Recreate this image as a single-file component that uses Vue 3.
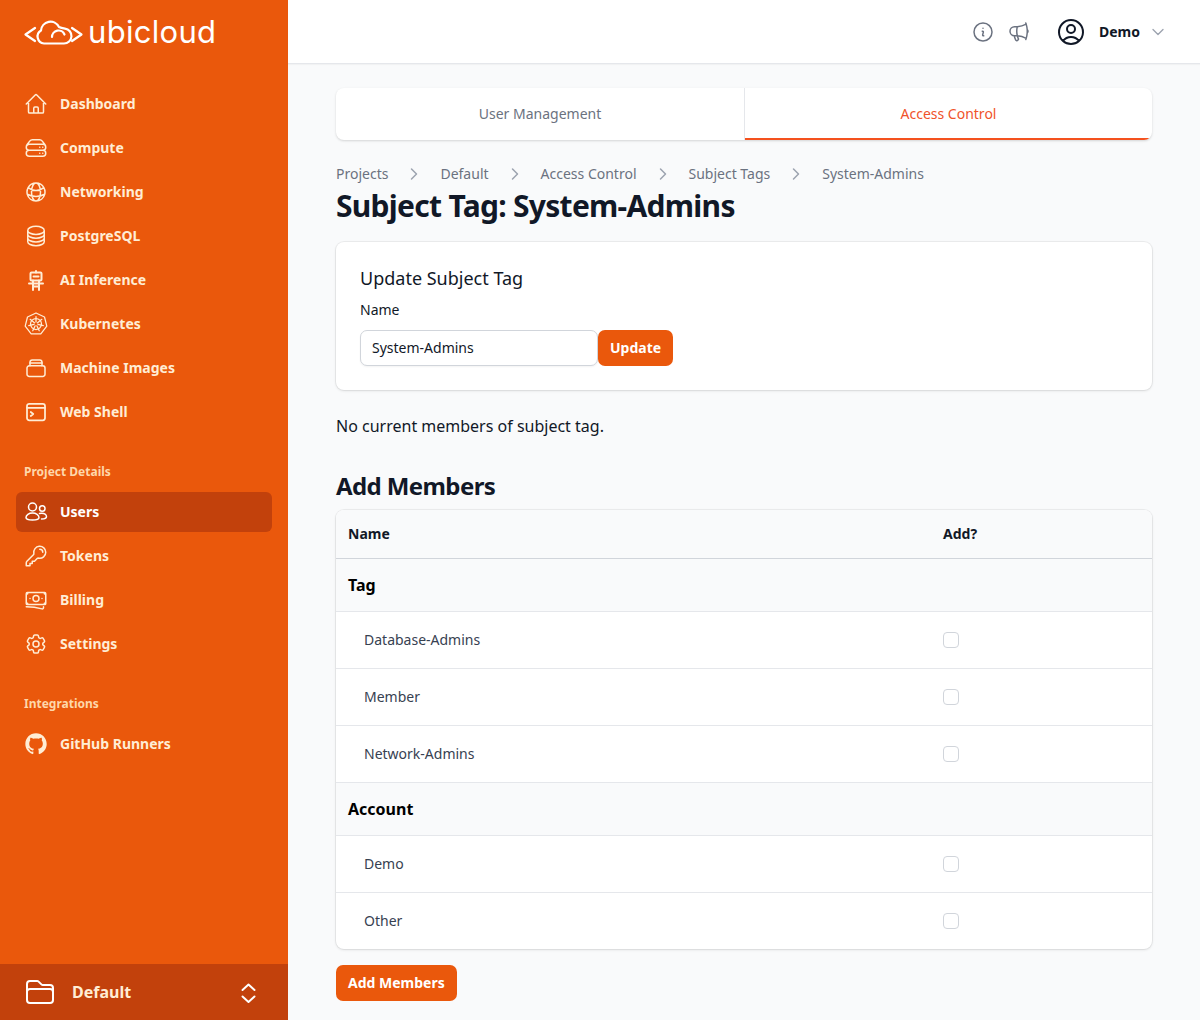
<template>
  <div class="layout">
    <aside class="sidebar">
      <div class="logo">
        <svg class="logoMark" viewBox="24 18 60 26" fill="none" stroke="#fff" stroke-width="2.2" stroke-linecap="round" stroke-linejoin="round">
          <path d="M35 27 25.500 33.500 35 40" />
          <path d="M72 27 81.500 33.500 72 40" />
          <path d="M44 42.500H64a7.500 7.500 0 0 0 1-14.930C62.800 27.300 60.800 27 59 26A9.500 9.500 0 0 0 41 29.500 7 7 0 0 0 44 42.500Z" />
          <path d="M52 36A6.500 6.500 0 0 1 64.500 33.500" />
        </svg>
        <span class="logoText">ubicloud</span>
      </div>

      <nav class="nav firstNav">
        <a v-for="item in mainNav" :key="item.label" class="navItem">
          <svg class="navIcon" viewBox="0 0 24 24" fill="none" stroke="currentColor" :stroke-width="item.stroke || 1.5" stroke-linecap="round" stroke-linejoin="round">
            <path v-for="d in item.paths" :key="d" :d="d" />
          </svg>
          {{ item.label }}
        </a>
      </nav>

      <div class="navHeading">Project Details</div>
      <nav class="nav">
        <a v-for="item in projectNav" :key="item.label" class="navItem" :class="{ active: item.active }">
          <svg class="navIcon" viewBox="0 0 24 24" fill="none" stroke="currentColor" stroke-width="1.5" stroke-linecap="round" stroke-linejoin="round">
            <path v-for="d in item.paths" :key="d" :d="d" />
          </svg>
          {{ item.label }}
        </a>
      </nav>

      <div class="navHeading">Integrations</div>
      <nav class="nav">
        <a class="navItem">
          <svg class="navIcon" viewBox="-1.500 -1.500 27 27" fill="currentColor">
            <path :d="githubPath" />
          </svg>
          GitHub Runners
        </a>
      </nav>

      <div class="projectSwitch">
        <svg class="folderIcon" viewBox="0 0 24 24" fill="none" stroke="currentColor" stroke-width="1.5" stroke-linecap="round" stroke-linejoin="round">
          <path d="M2.250 12.750V12A2.250 2.250 0 0 1 4.500 9.750h15A2.250 2.250 0 0 1 21.750 12v.75m-8.690-6.440-2.120-2.120a1.500 1.500 0 0 0-1.061-.44H4.500A2.250 2.250 0 0 0 2.250 6v12a2.250 2.250 0 0 0 2.250 2.250h15A2.250 2.250 0 0 0 21.750 18V9a2.250 2.250 0 0 0-2.250-2.250h-5.379a1.500 1.500 0 0 1-1.060-.44Z" />
        </svg>
        <span class="projectName">Default</span>
        <svg class="upDown" viewBox="0 0 24 24" fill="none" stroke="currentColor" stroke-width="2" stroke-linecap="round" stroke-linejoin="round">
          <path d="M6.500 10l6-5.500 6 5.500M6.500 16.500l6 5.500 6-5.500" />
        </svg>
      </div>
    </aside>

    <div class="content">
      <header class="topbar">
        <svg class="topIcon" viewBox="0 0 24 24" fill="none" stroke="currentColor" stroke-width="1.500" stroke-linecap="round" stroke-linejoin="round">
          <path d="m11.250 11.250.041-.02a.750.750 0 0 1 1.063.852l-.708 2.836a.750.750 0 0 0 1.063.853l.041-.021M21 12a9 9 0 1 1-18 0 9 9 0 0 1 18 0Zm-9-3.750h.008v.008H12V8.250Z" />
        </svg>
        <svg class="topIcon megaphone" viewBox="0 0 24 24" fill="none" stroke="currentColor" stroke-width="1.500" stroke-linecap="round" stroke-linejoin="round">
          <path d="M10.340 15.840c-.688-.06-1.386-.09-2.090-.09H7.500a4.500 4.500 0 1 1 0-9h.75c.704 0 1.402-.03 2.090-.09m0 9.180c.253.962.584 1.892.985 2.783.247.55.06 1.210-.463 1.511l-.657.38c-.551.318-1.260.117-1.527-.461a20.845 20.845 0 0 1-1.440-4.282m3.102.069a18.030 18.030 0 0 1-.59-4.590c0-1.586.205-3.124.59-4.590m0 9.180a23.848 23.848 0 0 1 8.835 2.535M10.340 6.660a23.847 23.847 0 0 0 8.835-2.535m0 0A23.740 23.740 0 0 0 18.795 3m.38 1.125a23.910 23.910 0 0 1 1.014 5.395m-1.014 8.855c-.118.38-.245.754-.38 1.125m.38-1.125a23.910 23.910 0 0 0 1.014-5.395m0-3.460c.495.413.811 1.035.811 1.730 0 .695-.316 1.317-.811 1.730m0-3.460a24.347 24.347 0 0 1 0 3.460" />
        </svg>
        <svg class="avatar" viewBox="0 0 24 24" fill="none" stroke="currentColor" stroke-width="1.500" stroke-linecap="round" stroke-linejoin="round">
          <path d="M17.982 18.725A7.488 7.488 0 0 0 12 15.750a7.488 7.488 0 0 0-5.982 2.975m11.963 0a9 9 0 1 0-11.963 0m11.963 0A8.966 8.966 0 0 1 12 21a8.966 8.966 0 0 1-5.982-2.275M15 9.750a3 3 0 1 1-6 0 3 3 0 0 1 6 0Z" />
        </svg>
        <span class="userName">Demo</span>
        <svg class="userChevron" viewBox="0 0 24 24" fill="none" stroke="currentColor" stroke-width="2" stroke-linecap="round" stroke-linejoin="round">
          <path d="m19.500 8.250-7.500 7.500-7.500-7.500" />
        </svg>
      </header>

      <main class="main">
        <div class="tabs">
          <a class="tab">User Management</a>
          <a class="tab tabActive">Access Control</a>
        </div>

        <ol class="breadcrumb">
          <li v-for="(crumb, i) in crumbs" :key="crumb" class="crumb">
            <svg v-if="i > 0" class="crumbChevron" viewBox="0 0 20 20" fill="none" stroke="currentColor" stroke-width="1.500" stroke-linecap="round" stroke-linejoin="round">
              <path d="m7.500 5 5 5-5 5" />
            </svg>
            {{ crumb }}
          </li>
        </ol>
        <h1 class="title">Subject Tag: System-Admins</h1>

        <section class="card">
          <h3 class="cardTitle">Update Subject Tag</h3>
          <label class="fieldLabel" for="tag-name">Name</label>
          <div class="fieldRow">
            <input id="tag-name" class="textInput" type="text" value="System-Admins" />
            <button class="button">Update</button>
          </div>
        </section>

        <p class="noMembers">No current members of subject tag.</p>

        <h2 class="sectionTitle">Add Members</h2>
        <div class="tableWrap">
          <table class="table">
            <thead>
              <tr>
                <th class="nameCol">Name</th>
                <th>Add?</th>
              </tr>
            </thead>
            <tbody v-for="group in groups" :key="group.name">
              <tr class="groupRow">
                <td colspan="2">{{ group.name }}</td>
              </tr>
              <tr v-for="member in group.members" :key="member" class="memberRow">
                <td class="memberName">{{ member }}</td>
                <td><input class="checkbox" type="checkbox" /></td>
              </tr>
            </tbody>
          </table>
        </div>

        <button class="button addButton">Add Members</button>
      </main>
    </div>
  </div>
</template>

<script setup>
const mainNav = [
  {
    label: 'Dashboard',
    paths: ['m2.250 12 8.954-8.955c.44-.439 1.152-.439 1.591 0L21.750 12M4.500 9.750v10.125c0 .621.504 1.125 1.125 1.125H9.750v-4.875c0-.621.504-1.125 1.125-1.125h2.250c.621 0 1.125.504 1.125 1.125V21h4.125c.621 0 1.125-.504 1.125-1.125V9.750M8.250 21h8.250'],
  },
  {
    label: 'Compute',
    paths: ['M5.250 14.250h13.500m-13.500 0a3 3 0 0 1-3-3m3 3a3 3 0 1 0 0 6h13.500a3 3 0 1 0 0-6m-16.500-3a3 3 0 0 1 3-3h13.500a3 3 0 0 1 3 3m-19.500 0a4.500 4.500 0 0 1 .9-2.700L5.737 5.100a3.375 3.375 0 0 1 2.700-1.350h7.126c1.062 0 2.062.5 2.700 1.350l2.587 3.450a4.500 4.500 0 0 1 .9 2.700m0 0a3 3 0 0 1-3 3m0 3h.008v.008h-.008v-.008Zm0-6h.008v.008h-.008v-.008Zm-3 6h.008v.008h-.008v-.008Zm0-6h.008v.008h-.008v-.008Z'],
  },
  {
    label: 'Networking',
    paths: ['M12 21a9.004 9.004 0 0 0 8.716-6.747M12 21a9.004 9.004 0 0 1-8.716-6.747M12 21c2.485 0 4.500-4.030 4.500-9S14.485 3 12 3m0 18c-2.485 0-4.500-4.030-4.500-9S9.515 3 12 3m0 0a8.997 8.997 0 0 1 7.843 4.582M12 3a8.997 8.997 0 0 0-7.843 4.582m15.686 0A11.953 11.953 0 0 1 12 10.500c-2.998 0-5.740-1.100-7.843-2.918m15.686 0A8.959 8.959 0 0 1 21 12c0 .778-.099 1.533-.284 2.253m0 0A17.919 17.919 0 0 1 12 16.500c-3.162 0-6.133-.815-8.716-2.247m0 0A9.015 9.015 0 0 1 3 12c0-1.605.42-3.113 1.157-4.418'],
  },
  {
    label: 'PostgreSQL',
    paths: ['M20.250 6.375c0 2.278-3.694 4.125-8.250 4.125S3.750 8.653 3.750 6.375m16.500 0c0-2.278-3.694-4.125-8.250-4.125S3.750 4.097 3.750 6.375m16.500 0v11.250c0 2.278-3.694 4.125-8.250 4.125s-8.250-1.847-8.250-4.125V6.375m16.500 0v3.750m-16.500-3.750v3.750m16.500 0v3.750C20.250 16.153 16.556 18 12 18s-8.250-1.847-8.250-4.125v-3.750m16.500 0c0 2.278-3.694 4.125-8.250 4.125s-8.250-1.847-8.250-4.125'],
  },
  {
    label: 'AI Inference',
    stroke: 2,
    paths: [
      'M7.500 4.500h9a1 1 0 0 1 1 1v6a1 1 0 0 1-1 1h-9a1 1 0 0 1-1-1v-6a1 1 0 0 1 1-1Z',
      'M12 4.500V3',
      'M9.500 8.500h5',
      'M5 15.500h14',
      'M9 12.500V22M15 12.500V22',
      'M9 18.500h6',
    ],
  },
  {
    label: 'Kubernetes',
    stroke: 1.25,
    paths: [
      'M12 1 20.500 5 22.800 14.200 16.800 21.800H7.200L1.200 14.200 3.500 5Z',
      'M12 6.500a5.500 5.500 0 1 0 0 11 5.500 5.500 0 0 0 0-11Z',
      'M12 10V4.500M13.560 10.760 17.850 7.350M13.940 12.440 19.280 13.650M12.860 13.800 15.230 18.750M11.140 13.800 8.770 18.750M10.060 12.440 4.720 13.650M10.440 10.760 6.150 7.350',
    ],
  },
  {
    label: 'Machine Images',
    paths: [
      'M6 9.750V6.250A2.250 2.250 0 0 1 8.250 4h7.500A2.250 2.250 0 0 1 18 6.250v3.500',
      'M5.250 9.750h13.500A2.250 2.250 0 0 1 21 12v6.250a2.250 2.250 0 0 1-2.250 2.250H5.250A2.250 2.250 0 0 1 3 18.250V12a2.250 2.250 0 0 1 2.250-2.250Z',
      'M6 7h12',
    ],
  },
  {
    label: 'Web Shell',
    stroke: 1.75,
    paths: [
      'M5.250 3.750h13.500A2.250 2.250 0 0 1 21 6v12a2.250 2.250 0 0 1-2.250 2.250H5.250A2.250 2.250 0 0 1 3 18V6a2.250 2.250 0 0 1 2.250-2.250Z',
      'M3 7.750h18',
      'm6.750 12 2.500 2-2.500 2',
    ],
  },
]

const projectNav = [
  {
    label: 'Users',
    active: true,
    paths: [
      'M12.500 7a4 4 0 1 1-8 0 4 4 0 0 1 8 0Z',
      'M21 8.500a2.750 2.750 0 1 1-5.500 0 2.750 2.750 0 0 1 5.500 0Z',
      'M8.500 13c-3.600 0-6.500 2-6.500 4.500 0 1.500 2.900 2.500 6.500 2.500s6.500-1 6.500-2.500c0-2.500-2.900-4.500-6.500-4.500Z',
      'M15.500 13.500c.6-.2 1.400-.3 2.200-.3 2.700 0 4.800 1.500 4.800 3.500 0 1.300-2 2.200-5 2.300',
    ],
  },
  {
    label: 'Tokens',
    paths: ['M15.750 5.250a3 3 0 0 1 3 3m3 0a6 6 0 0 1-7.029 5.912c-.563-.097-1.159.026-1.563.43L10.500 17.250H8.250v2.250H6v2.250H2.250v-2.818c0-.597.237-1.170.659-1.591l6.499-6.499c.404-.404.527-1 .43-1.563A6 6 0 1 1 21.750 8.250Z'],
  },
  {
    label: 'Billing',
    paths: ['M2.250 18.750a60.070 60.070 0 0 1 15.797 2.101c.727.198 1.453-.342 1.453-1.096V18.750M3.750 4.500v.75A.75.75 0 0 1 3 6h-.75m0 0v-.375c0-.621.504-1.125 1.125-1.125H20.250M2.250 6v9m18-10.500v.75c0 .414.336.75.75.75h.75m-1.500-1.500h.375c.621 0 1.125.504 1.125 1.125v9.750c0 .621-.504 1.125-1.125 1.125h-.375m1.500-1.500H21a.75.75 0 0 0-.75.75v.75m0 0H3.750m0 0h-.375a1.125 1.125 0 0 1-1.125-1.125V15m1.500 1.500v-.75A.75.75 0 0 0 3 15h-.75M15 10.500a3 3 0 1 1-6 0 3 3 0 0 1 6 0Zm3 0h.008v.008H18V10.500Zm-12 0h.008v.008H6V10.500Z'],
  },
  {
    label: 'Settings',
    paths: [
      'M9.594 3.940c.09-.542.56-.94 1.110-.94h2.593c.55 0 1.020.398 1.110.94l.213 1.281c.063.374.313.686.645.87.074.04.147.083.22.127.324.196.72.257 1.075.124l1.217-.456a1.125 1.125 0 0 1 1.370.49l1.296 2.247a1.125 1.125 0 0 1-.26 1.431l-1.003.827c-.293.24-.438.613-.431.992a6.759 6.759 0 0 1 0 .255c-.007.378.138.75.43.99l1.005.828c.424.35.534.954.26 1.430l-1.298 2.247a1.125 1.125 0 0 1-1.369.491l-1.217-.456c-.355-.133-.75-.072-1.076.124a6.570 6.570 0 0 1-.22.128c-.331.183-.581.495-.644.869l-.213 1.280c-.09.543-.56.941-1.110.941h-2.594c-.55 0-1.020-.398-1.110-.94l-.213-1.281c-.062-.374-.312-.686-.644-.87a6.520 6.520 0 0 1-.22-.127c-.325-.196-.72-.257-1.076-.124l-1.217.456a1.125 1.125 0 0 1-1.369-.49l-1.297-2.247a1.125 1.125 0 0 1 .26-1.431l1.004-.827c.292-.24.437-.613.43-.992a6.932 6.932 0 0 1 0-.255c.007-.378-.138-.75-.43-.99l-1.004-.828a1.125 1.125 0 0 1-.26-1.430l1.297-2.247a1.125 1.125 0 0 1 1.370-.491l1.216.456c.356.133.751.072 1.076-.124.072-.044.146-.087.22-.128.332-.183.582-.495.644-.869l.214-1.281Z',
      'M15 12a3 3 0 1 1-6 0 3 3 0 0 1 6 0Z',
    ],
  },
]

const githubPath = 'M12 0c-6.626 0-12 5.373-12 12 0 5.302 3.438 9.800 8.205 11.387.6.111.82-.261.82-.577v-2.234c-3.338.726-4.033-1.416-4.033-1.416-.546-1.387-1.333-1.756-1.333-1.756-1.089-.745.083-.729.083-.729 1.205.084 1.839 1.237 1.839 1.237 1.070 1.834 2.807 1.304 3.492.997.107-.775.418-1.305.762-1.604-2.665-.305-5.467-1.334-5.467-5.931 0-1.311.469-2.381 1.236-3.221-.124-.303-.535-1.524.117-3.176 0 0 1.008-.322 3.301 1.230.957-.266 1.983-.399 3.003-.404 1.020.005 2.047.138 3.006.404 2.291-1.552 3.297-1.230 3.297-1.230.653 1.653.242 2.874.118 3.176.77.84 1.235 1.911 1.235 3.221 0 4.609-2.807 5.624-5.479 5.921.43.372.823 1.102.823 2.222v3.293c0 .319.192.694.801.576 4.765-1.589 8.199-6.086 8.199-11.386 0-6.627-5.373-12-12-12Z'

const crumbs = ['Projects', 'Default', 'Access Control', 'Subject Tags', 'System-Admins']

const groups = [
  { name: 'Tag', members: ['Database-Admins', 'Member', 'Network-Admins'] },
  { name: 'Account', members: ['Demo', 'Other'] },
]
</script>

<style>
html,
body {
  margin: 0;
  background: #f9fafb;
}
</style>

<style scoped>
.layout {
  display: flex;
  min-height: 1020px;
  font-family: 'Noto Sans', sans-serif;
  color: #111827;
}

.sidebar {
  display: flex;
  flex-direction: column;
  flex: 0 0 288px;
  box-sizing: border-box;
  height: 1020px;
  padding: 0 16px;
  background: #ea580c;
}

.logo {
  display: flex;
  align-items: center;
  gap: 4px;
  height: 64px;
  padding-left: 8px;
}

.logoMark {
  flex: none;
  width: 60px;
  height: 26px;
}

.logoText {
  margin-top: -2px;
  font-family: 'Inter', sans-serif;
  font-size: 31px;
  font-weight: 400;
  line-height: 1;
  letter-spacing: 0.3px;
  color: #fff;
}

.nav {
  display: flex;
  flex-direction: column;
  gap: 4px;
}

.firstNav {
  margin-top: 20px;
}

.navItem {
  display: flex;
  align-items: center;
  gap: 12px;
  height: 40px;
  padding: 0 8px;
  border-radius: 6px;
  font-size: 14px;
  line-height: 20px;
  font-weight: 700;
  color: #ffedd5;
}

.navItem.active {
  background: #c2410c;
  color: #fff;
}

.navIcon {
  flex: none;
  width: 24px;
  height: 24px;
}

.navHeading {
  margin-top: 32px;
  margin-bottom: 12px;
  padding-left: 8px;
  font-size: 12px;
  line-height: 16px;
  font-weight: 700;
  color: #fed7aa;
}

.projectSwitch {
  display: flex;
  align-items: center;
  height: 56px;
  margin: auto -16px 0;
  padding: 0 28px 0 24px;
  background: #c2410c;
  color: #fff;
}

.folderIcon {
  width: 32px;
  height: 32px;
}

.projectName {
  flex: 1;
  margin-left: 16px;
  font-size: 16px;
  font-weight: 700;
  color: #ffedd5;
}

.upDown {
  width: 24px;
  height: 24px;
}

.content {
  flex: 1;
  min-width: 0;
}

.topbar {
  display: flex;
  align-items: center;
  justify-content: flex-end;
  box-sizing: border-box;
  height: 64px;
  padding: 0 34px 0 0;
  background: #fff;
  box-shadow: inset 0 -1px 0 #e5e7eb, 0 1px 1px rgba(0, 0, 0, 0.03);
}

.topIcon {
  width: 24px;
  height: 24px;
  color: #6b7280;
}

.megaphone {
  margin-left: 12px;
}

.avatar {
  width: 32px;
  height: 32px;
  margin-left: 24px;
  color: #111827;
}

.userName {
  margin-left: 12px;
  font-size: 14px;
  line-height: 20px;
  font-weight: 700;
}

.userChevron {
  width: 16px;
  height: 16px;
  margin-left: 10px;
  color: #9ca3af;
}

.main {
  padding: 24px 48px 0;
}

.tabs {
  display: grid;
  grid-template-columns: 1fr 1fr;
  height: 52px;
  border-radius: 8px;
  background: #fff;
  box-shadow: 0 1px 3px rgba(0, 0, 0, 0.1), 0 1px 2px rgba(0, 0, 0, 0.06);
  overflow: hidden;
}

.tab {
  display: flex;
  align-items: center;
  justify-content: center;
  font-size: 14px;
  line-height: 20px;
  color: #6b7280;
}

.tabActive {
  box-sizing: border-box;
  border-left: 1px solid #e5e7eb;
  box-shadow: inset 0 -2px 0 #f4511e;
  color: #f0532a;
}

.breadcrumb {
  display: flex;
  margin: 24px 0 0;
  padding: 0;
  list-style: none;
}

.crumb {
  display: flex;
  align-items: center;
  font-size: 14px;
  line-height: 20px;
  color: #6b7280;
}

.crumbChevron {
  width: 20px;
  height: 20px;
  margin: 0 16px;
  color: #9ca3af;
}

.title {
  margin: 0;
  font-size: 30px;
  line-height: 44px;
  font-weight: 700;
  letter-spacing: -0.71px;
}

.card {
  box-sizing: border-box;
  height: 148px;
  margin-top: 14px;
  padding: 24px;
  border-radius: 8px;
  background: #fff;
  box-shadow: 0 1px 3px rgba(0, 0, 0, 0.1), 0 0 0 1px rgba(0, 0, 0, 0.05);
}

.cardTitle {
  margin: 0;
  font-size: 18px;
  line-height: 24px;
  font-weight: 400;
}

.fieldLabel {
  display: block;
  margin-top: 8px;
  font-size: 14px;
  line-height: 24px;
}

.fieldRow {
  display: flex;
  margin-top: 8px;
}

.textInput {
  box-sizing: border-box;
  width: 238px;
  height: 36px;
  padding: 0 11px 2px;
  border: 1px solid #d1d5db;
  border-radius: 7px;
  background: #fff;
  box-shadow: 0 1px 2px rgba(0, 0, 0, 0.05);
  font: 14px/20px 'Noto Sans', sans-serif;
  color: #111827;
  outline: none;
}

.button {
  height: 36px;
  padding: 0 12px;
  border: 0;
  border-radius: 7px;
  background: #ea580c;
  font: 700 14px/20px 'Noto Sans', sans-serif;
  color: #fff;
}

.noMembers {
  margin: 24px 0 0;
  font-size: 16px;
  line-height: 24px;
}

.sectionTitle {
  margin: 32px 0 0;
  font-size: 24px;
  line-height: 32px;
  font-weight: 700;
  letter-spacing: -0.6px;
}

.tableWrap {
  margin-top: 8px;
  border-radius: 8px;
  background: #fff;
  box-shadow: 0 1px 3px rgba(0, 0, 0, 0.1), 0 0 0 1px rgba(0, 0, 0, 0.05);
  overflow: hidden;
}

.table {
  width: 100%;
  border-collapse: collapse;
  font-size: 14px;
  line-height: 20px;
}

.table th {
  height: 48px;
  padding: 0 12px;
  background: #f9fafb;
  border-bottom: 1px solid #d1d5db;
  font-size: 14px;
  font-weight: 700;
  text-align: left;
}

.nameCol {
  width: 571px;
}

.groupRow td {
  height: 52px;
  padding: 0 12px;
  background: #f9fafb;
  border-bottom: 1px solid #e5e7eb;
  font-size: 16px;
  line-height: normal;
  font-weight: 700;
  color: #000;
}

.memberRow td {
  height: 56px;
  padding: 0 12px;
  border-bottom: 1px solid #e5e7eb;
  color: #374151;
}

.memberRow td.memberName {
  padding-left: 28px;
}

tbody:last-child .memberRow:last-child td {
  border-bottom: 0;
}

.checkbox {
  display: block;
  appearance: none;
  box-sizing: border-box;
  width: 16px;
  height: 16px;
  margin: 0;
  border: 1px solid #d1d5db;
  border-radius: 4px;
  background: #fff;
}

.addButton {
  display: block;
  margin-top: 16px;
}
</style>
